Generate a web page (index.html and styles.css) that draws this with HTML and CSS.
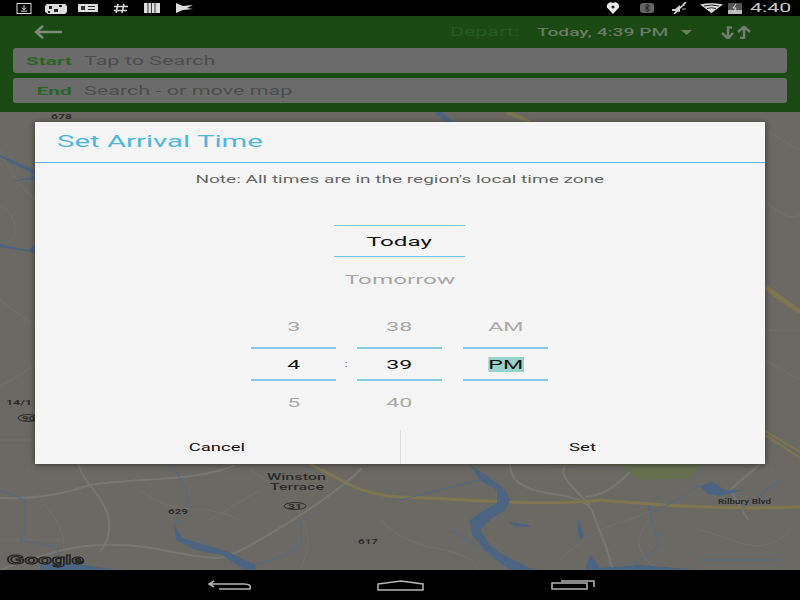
FILE: index.html
```html
<!DOCTYPE html>
<html lang="en">
<head>
<meta charset="utf-8">
<title>Set Arrival Time</title>
<link rel="stylesheet" href="styles.css">
</head>
<body>
<div class="screen">
  <div class="status">
    <div class="status-group left">
      <svg class="ic" width="16" height="11" viewBox="0 0 16 11"><rect x="1" y="0.500" width="14" height="10" fill="none" stroke="#ddd"/><path d="M8 2v4M5.800 4.500 8 7l2.200-2.500M5 8.200h6" fill="none" stroke="#ddd"/></svg>
      <svg class="ic" width="22" height="11" viewBox="0 0 22 11"><path d="M2 1h18l2 2v6l-2 2H3L0 9V3z" fill="#ddd"/><path d="M4 3h3v3H4zM9 6h4v3H9zM14 2h3v2h-3zM3 8h2v2H3z" fill="#222"/></svg>
      <svg class="ic" width="20" height="8" viewBox="0 0 20 8"><rect width="20" height="8" rx="1" fill="#ddd"/><path d="M10 2h7v1h-7zM10 5h7v1h-7zM3 2h4v4H3z" fill="#333"/></svg>
      <svg class="ic" width="16" height="11" viewBox="0 0 16 11"><path d="M5 1 3 10M11 1 9 10M1 3.500h14M1 7.500h13" fill="none" stroke="#ddd" stroke-width="1.500"/></svg>
      <svg class="ic" width="16" height="10" viewBox="0 0 16 10"><path d="M0 0h16v10H0z" fill="#ddd"/><path d="M4 0v10M7.500 0v10M11 0v10" stroke="#333"/></svg>
      <svg class="ic" width="17" height="10" viewBox="0 0 17 10"><path d="M0 0 7 3 17 2 11 5 17 6 7 7 0 10z" fill="#ddd"/></svg>
    </div>
    <div class="status-group right">
      <svg class="ic" width="14" height="12" viewBox="0 0 14 12"><path d="M7 12 1 5.500A4 4 0 0 1 7 1a4 4 0 0 1 6 4.500z" fill="#eee"/><circle cx="7" cy="5" r="1.600" fill="#222"/></svg>
      <svg class="ic" width="14" height="10" viewBox="0 0 14 10"><rect width="14" height="10" rx="3" fill="#666"/><path d="M4.500 3 9.500 7 7 9V1l2.500 2-5 4" fill="none" stroke="#222"/></svg>
      <svg class="ic" width="17" height="12" viewBox="0 0 17 12"><path d="M1 7h3l5-4v7L4 9H1z" fill="#ccc"/><path d="M3 12 15 0" stroke="#ddd" stroke-width="1.500"/><path d="M11 4l3-1M11 7h4" stroke="#aaa"/></svg>
      <svg class="ic" width="23" height="10" viewBox="0 0 23 10"><path d="M0 1.500Q11.500-1 23 1.500L11.500 10z" fill="#ddd"/><path d="M4 3Q11.500 1 19 3M7 5.500Q11.500 4 16 5.500" fill="none" stroke="#222"/></svg>
      <svg class="ic" width="14" height="11" viewBox="0 0 14 11"><rect width="14" height="11" fill="#bbb"/><rect width="14" height="7" fill="#555"/><path d="M8 1 5 5h3L6 9" fill="none" stroke="#ddd"/></svg>
      <span class="time"><span class="stretch center">4:40</span></span>
    </div>
  </div>

  <header class="header">
    <div class="toolbar">
      <svg class="back" width="28" height="14" viewBox="0 0 28 14"><path d="M28 7H3M9 1 2 7l7 6" fill="none" stroke="#7c8a76" stroke-width="2.500"/></svg>
      <div class="schedule">
        <span class="depart-label"><span class="stretch">Depart:</span></span>
        <span class="depart-value"><span class="stretch">Today, 4:39 PM</span></span>
        <svg class="caret" width="11" height="5" viewBox="0 0 11 5"><path d="M0 0h11L5.500 5z" fill="#6f7f68"/></svg>
        <svg class="swap" width="32" height="13" viewBox="0 0 32 13"><path d="M12 1.500H8V12M2 7l6 5.500L13 7M20 12h4V1.500M18 6l6-5.500L30 6" fill="none" stroke="#6f7f68" stroke-width="2.500"/></svg>
      </div>
    </div>
    <div class="field">
      <span class="field-label"><span class="stretch right-origin">Start</span></span>
      <span class="field-text"><span class="stretch">Tap to Search</span></span>
    </div>
    <div class="field">
      <span class="field-label"><span class="stretch right-origin">End</span></span>
      <span class="field-text"><span class="stretch">Search - or move map</span></span>
    </div>
  </header>

  <main class="map">
    <svg class="map-art" width="800" height="458" viewBox="0 112 800 458">
      <rect x="0" y="112" width="800" height="458" fill="#6b6963"/>
      <g fill="none" stroke="#72716c" stroke-width="1">
        <path d="M0 150C10 175 25 190 35 200M0 300C15 310 25 320 35 325M0 440H35M0 385C15 380 25 370 35 365M0 205C18 215 20 240 5 245"/>
        <path d="M765 130 800 150M765 200C780 215 790 220 800 215M765 330H800M765 360 800 380M0 540H60M40 500C60 520 70 540 60 570M140 490C180 520 200 500 240 520M210 520 260 490M250 470C300 500 320 530 300 570M380 520C420 560 460 540 480 570M650 520C630 540 640 560 660 570M700 530C740 540 760 560 790 530M560 560C600 520 640 520 650 510"/>
      </g>
      <g fill="none" stroke="#777672" stroke-width="2">
        <path d="M0 498C40 500 70 492 90 485C125 478 200 482 235 465"/>
        <path d="M78 462C80 480 100 490 108 515C112 535 105 545 100 552"/>
        <path d="M0 570C40 555 75 545 100 545C160 543 180 558 220 558C240 555 330 500 362 468"/>
        <path d="M510 464C510 480 520 490 560 495C570 497 585 500 592 510C598 530 610 550 612 570"/>
        <path d="M565 465C558 475 570 485 590 505M585 497C610 495 620 480 635 468"/>
        <path d="M765 460 730 490 748 520"/>
      </g>
      <g fill="none" stroke="#7f7650" stroke-width="3">
        <path d="M310 464C340 478 358 495 400 497C470 499 540 507 600 500C660 505 720 510 800 507"/>
        <path d="M507 112 530 122" stroke-width="4"/>
        <path d="M762 285 800 312" stroke-width="5"/>
        <path d="M760 428 800 452M762 433 800 458" stroke-width="2"/>
      </g>
      <g fill="#4a6482">
        <path d="M434 112 442 112 453 122 446 122Z"/>
        <path d="M0 155 35 170 35 175 22 168 0 157Z"/>
        <path d="M12 181 28 178 35 176 35 180 24 180Z"/>
        <path d="M0 244 28 250 35 245 35 253 24 251 0 247Z"/>
        <path d="M174 525 182 538 205 545 228 552 255 565 256 570 245 570 222 555 196 550 176 540Z"/>
        <path d="M470 465 490 478 505 490 510 500 505 510 492 518 480 530 490 545 500 553 530 568 540 570 510 570 490 555 472 535 470 520 485 510 497 503 497 490 480 480Z"/>
        <path d="M508 522 525 524 532 527 515 526Z"/>
        <path d="M578 520 584 536 580 540 578 530Z"/>
        <path d="M700 486 712 482 725 490 745 490 720 496 708 494Z"/>
        <path d="M585 570 590 555 600 568 640 565 700 570Z"/>
        <path d="M40 565 60 562 90 566 120 570 40 570Z"/>
      </g>
      <g fill="none" stroke="#4f6a8b" stroke-width="1">
        <path d="M172 465C180 480 190 490 188 500C185 515 175 515 176 525"/>
        <path d="M250 565C270 562 290 555 300 545C305 520 295 525 305 518"/>
        <path d="M0 490 25 500 25 530 20 540 55 547 60 555"/>
        <path d="M660 508C680 500 690 490 700 486M660 508 655 512 648 505 655 530 660 545 640 560 630 570"/>
        <path d="M780 480 740 510M400 500 480 480"/>
        <path d="M780 560H700M510 565 450 530"/>
      </g>
      <path d="M510 464H700L690 478 640 480 620 465Z" fill="#67704f"/>
      <g class="map-text">
        <text x="51" y="119" class="t-s" textLength="21" lengthAdjust="spacingAndGlyphs">678</text>
        <text x="6" y="405" class="t-s" textLength="26" lengthAdjust="spacingAndGlyphs">14/1</text>
        <text x="267" y="480" class="t-m" textLength="59" lengthAdjust="spacingAndGlyphs">Winston</text>
        <text x="270" y="490" class="t-m" textLength="54" lengthAdjust="spacingAndGlyphs">Terrace</text>
        <text x="168" y="514" class="t-s" textLength="20" lengthAdjust="spacingAndGlyphs">629</text>
        <text x="358" y="544" class="t-s" textLength="20" lengthAdjust="spacingAndGlyphs">617</text>
        <text x="718" y="504" class="t-s" textLength="53" lengthAdjust="spacingAndGlyphs">Rilbury Blvd</text>
        <text x="288" y="509" class="t-xs" textLength="14" lengthAdjust="spacingAndGlyphs">31</text>
        <text x="22" y="421" class="t-xs" textLength="13" lengthAdjust="spacingAndGlyphs">90</text>
      </g>
      <ellipse cx="295" cy="506" rx="11" ry="3.500" fill="none" stroke="#2d2d2d"/>
      <ellipse cx="28" cy="418" rx="10" ry="3.500" fill="none" stroke="#2d2d2d"/>
      <text class="logo" x="7" y="564" textLength="77" lengthAdjust="spacingAndGlyphs">Google</text>
    </svg>

    <section class="dialog">
      <div class="dialog-title"><span class="stretch">Set Arrival Time</span></div>
      <div class="note"><span class="stretch center">Note: All times are in the region's local time zone</span></div>
      <div class="day-picker">
        <div class="day current"><span class="stretch center">Today</span></div>
        <div class="day next"><span class="stretch center">Tomorrow</span></div>
      </div>
      <div class="time-picker">
        <div class="column">
          <div class="cell muted"><span class="stretch center">3</span></div>
          <div class="cell selected"><span class="stretch center">4</span></div>
          <div class="cell muted"><span class="stretch center">5</span></div>
        </div>
        <div class="colon"><span class="stretch center">:</span></div>
        <div class="column">
          <div class="cell muted"><span class="stretch center">38</span></div>
          <div class="cell selected"><span class="stretch center">39</span></div>
          <div class="cell muted"><span class="stretch center">40</span></div>
        </div>
        <div class="gap"></div>
        <div class="column">
          <div class="cell muted"><span class="stretch center">AM</span></div>
          <div class="cell selected"><span class="stretch center highlight">PM</span></div>
          <div class="cell muted"></div>
        </div>
      </div>
      <div class="actions">
        <div class="action"><span class="stretch center">Cancel</span></div>
        <div class="action"><span class="stretch center">Set</span></div>
      </div>
    </section>
  </main>

  <nav class="navbar">
    <svg width="44" height="10" viewBox="0 0 44 10"><path d="M6 1 1 4l5 3M1 4H36C42 4 43 6 42 9H11" fill="none" stroke="#b5b5b5" stroke-width="1.500"/></svg>
    <svg width="47" height="11" viewBox="0 0 47 11"><path d="M1 4 24 1 46 4V10H1Z" fill="none" stroke="#b5b5b5" stroke-width="1.500"/></svg>
    <svg width="44" height="10" viewBox="0 0 44 10"><path d="M10 1H43V7" fill="none" stroke="#b5b5b5" stroke-width="1.500"/><rect x="1" y="3" width="35" height="6" fill="none" stroke="#b5b5b5" stroke-width="1.500"/></svg>
  </nav>
</div>
</body>
</html>
```
FILE: styles.css
```css
* { box-sizing: border-box; }
html, body { margin: 0; padding: 0; }
body { width: 800px; height: 600px; overflow: hidden; background: #000; font-family: Roboto, "Liberation Sans", sans-serif; }
.screen { width: 800px; height: 600px; display: flex; flex-direction: column; }

.stretch { display: inline-block; white-space: nowrap; transform: scaleX(1.78); transform-origin: left center; }
.stretch.center { transform-origin: center; }
.stretch.right-origin { transform-origin: right center; }

.status { height: 16px; background: #000; display: flex; justify-content: space-between; align-items: center; flex: none; }
.status-group { display: flex; align-items: center; }
.status-group.left { padding-left: 16px; }
.status-group.left .ic:nth-child(2) { margin-left: 13px; }
.status-group.left .ic:nth-child(3) { margin-left: 11px; }
.status-group.left .ic:nth-child(4) { margin-left: 15px; }
.status-group.left .ic:nth-child(5) { margin-left: 15px; }
.status-group.left .ic:nth-child(6) { margin-left: 16px; }
.status-group.right { padding-right: 9px; }
.status-group.right .ic:nth-child(1) { margin-right: 20px; }
.status-group.right .ic:nth-child(2) { margin-right: 17px; }
.status-group.right .ic:nth-child(3) { margin-right: 12px; }
.status-group.right .ic:nth-child(4) { margin-right: 5px; }
.status-group.right .ic:nth-child(5) { margin-right: 9px; }
.ic { display: block; }
.time { width: 40px; text-align: center; color: #c8c8c8; font-size: 12px; line-height: 16px; }

.header { height: 96px; flex: none; background: #1a4914; padding: 0 13px; }
.toolbar { height: 32px; display: flex; align-items: center; justify-content: space-between; padding: 0 35px 0 21px; }
.back { display: block; }
.schedule { display: flex; align-items: center; }
.depart-label { width: 87px; font-size: 12px; color: #245a1e; }
.depart-value { width: 144px; font-size: 10.800px; font-weight: 500; color: #6a7a64; }
.caret { margin-right: 28px; }
.field { height: 25px; margin-bottom: 5px; background: #6b6b6b; border-radius: 3px; display: flex; align-items: center; }
.field-label { width: 59px; text-align: right; font-size: 11.600px; font-weight: 700; color: #2a6426; }
.field-text { margin-left: 12px; font-size: 12.100px; color: #4d4d4d; }

.map { flex: 1; position: relative; overflow: hidden; }
.map-art { display: block; }
.map-text { fill: #2d2d2d; }
.t-s { font: 700 8px Roboto, sans-serif; }
.t-m { font: 500 8.500px Roboto, sans-serif; }
.t-xs { font: 700 7px Roboto, sans-serif; }
.logo { font: 700 13px "Liberation Sans", sans-serif; fill: #6c6a65; stroke: #222; stroke-width: 1; }

.dialog { position: absolute; left: 35px; top: 10px; width: 730px; height: 342px; background: #f5f5f5; box-shadow: 0 1px 6px rgba(0,0,0,.5); display: flex; flex-direction: column; }
.dialog-title { height: 41px; flex: none; padding: 8px 0 0 22px; font-size: 16.500px; line-height: 24px; color: #4db8e2; border-bottom: 1.500px solid #55b8dc; }
.note { height: 32px; flex: none; display: flex; align-items: center; justify-content: center; font-size: 10.700px; color: #666; }
.day-picker { width: 131px; margin: 30px 0 0 299px; flex: none; }
.day { display: flex; align-items: center; justify-content: center; font-size: 13.600px; }
.day.current { height: 32px; color: #111; border-top: 1px solid #7fc8e4; border-bottom: 1px solid #7fc8e4; }
.day.next { height: 43px; color: #a8a8a8; }
.time-picker { margin-top: 5px; padding-left: 216px; display: flex; flex: none; }
.column { width: 85px; }
.colon { width: 21px; height: 75px; padding-top: 42px; display: flex; align-items: center; justify-content: center; font-size: 9px; color: #777; }
.gap { width: 21px; }
.cell { display: flex; align-items: center; justify-content: center; font-size: 13px; }
.cell.muted { height: 42px; color: #aaa; }
.cell.selected { height: 34px; color: #111; border-top: 2px solid #86cbe6; border-bottom: 2px solid #86cbe6; }
.highlight { background: #98d2cc; line-height: 15px; }
.actions { margin-top: auto; height: 34px; display: flex; flex: none; }
.action { flex: 1; display: flex; align-items: center; justify-content: center; font-size: 10.400px; color: #111; }
.action + .action { border-left: 1.500px solid #ddd; }

.navbar { height: 30px; flex: none; background: #000; display: flex; align-items: center; padding-left: 208px; }
.navbar svg { display: block; }
.navbar svg:nth-child(2) { margin-left: 125px; }
.navbar svg:nth-child(3) { margin-left: 127px; }
```
